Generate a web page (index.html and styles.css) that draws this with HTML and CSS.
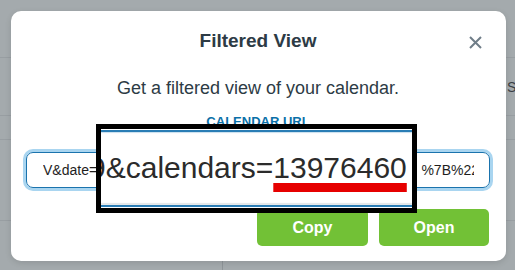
FILE: index.html
```html
<!DOCTYPE html>
<html lang="en">
<head>
<meta charset="utf-8">
<title>Filtered View</title>
<link rel="stylesheet" href="styles.css">
</head>
<body>
<div class="page">
  <div class="bg">
    <div class="row r1"></div>
    <div class="row r2"><span class="peek">Subscribe</span></div>
    <div class="row r3"></div>
    <div class="row r4"></div>
    <div class="row r5"><div class="cell c1"></div><div class="cell c2"></div></div>
  </div>

  <div class="modal">
    <div class="head">
      <span></span>
      <h2 class="title">Filtered View</h2>
      <button class="close" aria-label="Close">
        <svg width="13" height="13" viewBox="0 0 13 13"><path d="M1 1 L12 12 M12 1 L1 12" stroke="currentColor" stroke-width="2" stroke-linecap="butt" fill="none"/></svg>
      </button>
    </div>
    <p class="sub">Get a filtered view of your calendar.</p>
    <div class="label">CALENDAR URL</div>
    <div class="field">
      <div class="field-in">
        <span class="lead">V&amp;date=2024-01-01&amp;calendars=13976460</span>
        <span class="tail">%7B%22</span>
      </div>
    </div>
    <div class="actions">
      <button class="btn">Copy</button>
      <button class="btn">Open</button>
    </div>

    <div class="magnifier">
      <div class="mline top"></div>
      <div class="mtext"><span class="mtxt">9&amp;calendars=<span class="hl">13976460</span></span></div>
      <div class="mline bottom"></div>
    </div>
  </div>
</div>
</body>
</html>
```

FILE: styles.css
```css
* { box-sizing: border-box; }
html, body { margin: 0; padding: 0; }
body {
  width: 515px;
  height: 270px;
  overflow: hidden;
  font-family: "Liberation Sans", Arial, sans-serif;
  background: #a4aaad;
}
.page {
  position: relative;
  width: 515px;
  height: 270px;
}

/* dimmed page behind */
.bg { display: flex; flex-direction: column; height: 270px; }
.row { border-bottom: 1px solid #989ea2; }
.r1 { height: 58px; }
.r2 { height: 58px; padding: 20px 0 0 507px; overflow: hidden; white-space: nowrap; }
.peek { font-size: 14px; line-height: 16px; color: #3a4045; }
.r3 { height: 24px; }
.r4 { height: 81px; }
.r5 { flex: 1; border-bottom: 0; display: flex; }
.c1 { width: 222px; }
.c2 { flex: 1; border-left: 1px solid #8f9599; }

/* modal */
.modal {
  position: absolute;
  left: 11px;
  top: 11px;
  width: 495px;
  height: 250px;
  background: #fff;
  border-radius: 10px;
  box-shadow: 0 2px 6px rgba(0,0,0,0.12);
  padding: 16px 16px 15px 15px;
  display: flex;
  flex-direction: column;
}
.head {
  display: grid;
  grid-template-columns: 1fr auto 1fr;
  align-items: center;
}
.title {
  margin: 0;
  font-size: 19px;
  line-height: 24px;
  font-weight: 700;
  color: #2d3b45;
}
.close {
  justify-self: end;
  width: 24px;
  height: 24px;
  margin: 3px 3px 0 0;
  padding: 0;
  border: 0;
  background: none;
  color: #6f7d88;
  display: flex;
  align-items: center;
  justify-content: center;
}
.sub {
  margin: 22px 0 0;
  font-size: 18px;
  line-height: 24px;
  text-align: center;
  color: #2d3b45;
}
.label {
  margin-top: 14px;
  font-size: 13px;
  line-height: 16px;
  font-weight: 700;
  text-align: center;
  color: #0a70a8;
}
.field {
  margin-top: 22px;
  height: 39px;
  border: 1px solid #1a73ad;
  border-radius: 7px;
  box-shadow: 0 0 0 3px #a9d5f0;
  padding: 0 15px 0 16px;
  display: flex;
  align-items: center;
}
.field-in {
  flex: 1;
  min-width: 0;
  display: flex;
  justify-content: space-between;
  overflow: hidden;
  white-space: nowrap;
  font-size: 14px;
  line-height: 18px;
  color: #1e1e1e;
}
.lead { flex: 0 1 auto; overflow: hidden; min-width: 0; }
.tail { flex: 0 0 auto; margin-right: -5px; }

.actions {
  margin-top: 21px;
  display: flex;
  justify-content: flex-end;
  gap: 11px;
  padding-right: 1px;
}
.btn {
  width: 110px;
  height: 37px;
  border: 0;
  border-radius: 5px;
  background: #72c136;
  color: #fff;
  font-family: "Liberation Sans", Arial, sans-serif;
  font-size: 16px;
  font-weight: 700;
  padding: 0;
}
.btn:first-child { width: 111px; }

/* magnifier callout over the field */
.magnifier {
  position: absolute;
  left: 85px;
  top: 113px;
  width: 321px;
  height: 89px;
  border: 5px solid #000;
  background: #fff;
  display: flex;
  flex-direction: column;
  overflow: hidden;
}
.mline { height: 2px; background: #2a7db5; flex: 0 0 auto; }
.mline.top { margin-top: 1px; box-shadow: 0 1px 1px #c9dfee; }
.mline.bottom { margin-bottom: 1px; box-shadow: 0 -2px 1px #e2e6e8; }
.mtext {
  flex: 1;
  padding-top: 18px;
  overflow: hidden;
  white-space: nowrap;
}
.mtxt {
  display: block;
  margin-left: -12px;
  font-size: 30px;
  line-height: 36px;
  color: #2b2b2b;
}
.hl {
  text-decoration: underline;
  text-decoration-color: #e60000;
  text-decoration-thickness: 9px;
  text-underline-offset: 5px;
  text-decoration-skip-ink: none;
}
```
